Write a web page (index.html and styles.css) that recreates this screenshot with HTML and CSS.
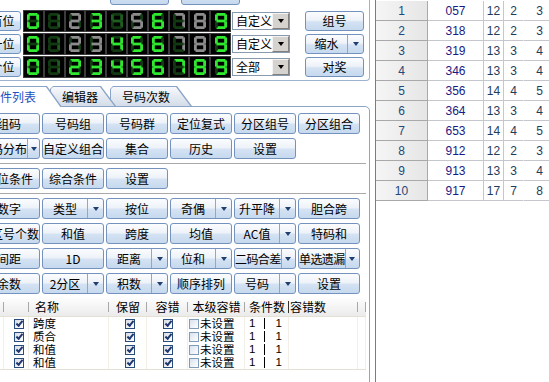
FILE: index.html
```html
<!DOCTYPE html>
<html lang="zh-CN">
<head>
    <meta charset="UTF-8">
    <meta name="viewport" content="width=device-width, initial-scale=1.0">

    <link rel="stylesheet" href="styles.css">

    <title>号码过滤</title>
</head>
<body onload="desenhaLeds()">
<div class="app">
    <div class="left">
        <div class="topbox">
            <div class="toolrow">
                <button class="btn tool">全部选择</button>
                <button class="btn tool">全部清除</button>
            </div>
            <div class="ledrow">
                <button class="btn pos">百位</button>
                <div class="led" data-estados="gdrgdrgrrg"></div>
                <div class="combo"><span>自定义</span><i></i></div>
                <button class="btn side-btn">组号</button>
            </div>
            <div class="ledrow">
                <button class="btn pos">十位</button>
                <div class="led" data-estados="gdrrgggrrg"></div>
                <div class="combo"><span>自定义</span><i></i></div>
                <button class="btn side-btn split"><span class="lbl">缩水</span><span class="arr"></span></button>
            </div>
            <div class="ledrow">
                <button class="btn pos">个位</button>
                <div class="led" data-estados="gdgggggggg"></div>
                <div class="combo"><span>全部</span><i></i></div>
                <button class="btn side-btn">对奖</button>
            </div>
        </div>

        <div class="tabs">
            <div class="tab sel">条件列表</div>
            <div class="tab t2">编辑器</div>
            <div class="tab t3">号码次数</div>
        </div>

        <div class="panel">
            <div class="btnrow">
                <button class="btn">组码</button>
                <button class="btn">号码组</button>
                <button class="btn">号码群</button>
                <button class="btn">定位复式</button>
                <button class="btn">分区组号</button>
                <button class="btn">分区组合</button>
            </div>
            <div class="btnrow">
                <button class="btn split"><span class="lbl">号码分布</span><span class="arr"></span></button>
                <button class="btn">自定义组合</button>
                <button class="btn">集合</button>
                <button class="btn">历史</button>
                <button class="btn">设置</button>
            </div>
            <div class="sep"></div>
            <div class="btnrow">
                <button class="btn">定位条件</button>
                <button class="btn">综合条件</button>
                <button class="btn">设置</button>
            </div>
            <div class="sep"></div>
            <div class="btnrow">
                <button class="btn">数字</button>
                <button class="btn split"><span class="lbl">类型</span><span class="arr"></span></button>
                <button class="btn">按位</button>
                <button class="btn split"><span class="lbl">奇偶</span><span class="arr"></span></button>
                <button class="btn split"><span class="lbl">升平降</span><span class="arr"></span></button>
                <button class="btn">胆合跨</button>
            </div>
            <div class="btnrow">
                <button class="btn">分区号个数</button>
                <button class="btn">和值</button>
                <button class="btn">跨度</button>
                <button class="btn">均值</button>
                <button class="btn split"><span class="lbl">AC值</span><span class="arr"></span></button>
                <button class="btn">特码和</button>
            </div>
            <div class="btnrow">
                <button class="btn">间距</button>
                <button class="btn">1D</button>
                <button class="btn split"><span class="lbl">距离</span><span class="arr"></span></button>
                <button class="btn split"><span class="lbl">位和</span><span class="arr"></span></button>
                <button class="btn split"><span class="lbl tight">二码合差</span><span class="arr"></span></button>
                <button class="btn split"><span class="lbl tight">单选遗漏</span><span class="arr"></span></button>
            </div>
            <div class="btnrow">
                <button class="btn">余数</button>
                <button class="btn split"><span class="lbl">2分区</span><span class="arr"></span></button>
                <button class="btn split"><span class="lbl">积数</span><span class="arr"></span></button>
                <button class="btn">顺序排列</button>
                <button class="btn split"><span class="lbl">号码</span><span class="arr"></span></button>
                <button class="btn">设置</button>
            </div>

            <div class="list">
                <div class="lrow lhead">
                    <span></span><span></span><span class="name">名称</span><span>保留</span><span>容错</span><span>本级容错</span><span>条件数</span><span class="name dark">容错数</span><span></span>
                </div>
                <div class="lbody">
                    <div class="lrow">
                        <span></span><span class="c1"><i class="chk on"></i></span><span class="name">跨度</span><span class="c3"><i class="chk on"></i></span><span class="c3"><i class="chk on"></i></span><span class="lvl"><i class="chk"></i>未设置</span><span class="cnt">1<b class="vbar"></b>1</span><span></span><span></span>
                    </div>
                    <div class="lrow">
                        <span></span><span class="c1"><i class="chk on"></i></span><span class="name">质合</span><span class="c3"><i class="chk on"></i></span><span class="c3"><i class="chk on"></i></span><span class="lvl"><i class="chk"></i>未设置</span><span class="cnt">1<b class="vbar"></b>1</span><span></span><span></span>
                    </div>
                    <div class="lrow">
                        <span></span><span class="c1"><i class="chk on"></i></span><span class="name">和值</span><span class="c3"><i class="chk on"></i></span><span class="c3"><i class="chk on"></i></span><span class="lvl"><i class="chk"></i>未设置</span><span class="cnt">1<b class="vbar"></b>1</span><span></span><span></span>
                    </div>
                    <div class="lrow">
                        <span></span><span class="c1"><i class="chk on"></i></span><span class="name">和值</span><span class="c3"><i class="chk on"></i></span><span class="c3"><i class="chk on"></i></span><span class="lvl"><i class="chk"></i>未设置</span><span class="cnt">1<b class="vbar"></b>1</span><span></span><span></span>
                    </div>
                </div>
            </div>
        </div>
    </div>

    <div class="side">
        <table class="grid">
            <tr><td class="no">1</td><td class="num">057</td><td class="c3">12</td><td class="c4">2</td><td>3</td></tr>
            <tr><td class="no">2</td><td class="num">318</td><td>12</td><td class="c4">2</td><td>3</td></tr>
            <tr><td class="no">3</td><td class="num">319</td><td>13</td><td class="c4">3</td><td>4</td></tr>
            <tr><td class="no">4</td><td class="num">346</td><td>13</td><td class="c4">3</td><td>4</td></tr>
            <tr><td class="no">5</td><td class="num">356</td><td>14</td><td class="c4">4</td><td>5</td></tr>
            <tr><td class="no">6</td><td class="num">364</td><td>13</td><td class="c4">3</td><td>4</td></tr>
            <tr><td class="no">7</td><td class="num">653</td><td>14</td><td class="c4">4</td><td>5</td></tr>
            <tr><td class="no">8</td><td class="num">912</td><td>12</td><td class="c4">2</td><td>3</td></tr>
            <tr><td class="no">9</td><td class="num">913</td><td>13</td><td class="c4">3</td><td>4</td></tr>
            <tr><td class="no">10</td><td class="num">917</td><td>17</td><td class="c4">7</td><td>8</td></tr>
        </table>
    </div>
</div>

<script>
    /* segmentos do display: x, y, largura, altura */
    var SEG = {
        a: [1.5, 0, 9, 2.8],
        b: [9.2, 1.4, 2.8, 6.3],
        c: [9.2, 8.3, 2.8, 6.3],
        d: [1.5, 13.2, 9, 2.8],
        e: [0, 8.3, 2.8, 6.3],
        f: [0, 1.4, 2.8, 6.3],
        g: [1.5, 6.6, 9, 2.8]
    };
    var DIGITOS = ["abcdef", "bc", "abdeg", "abcdg", "bcfg", "acdfg", "acdefg", "abc", "abcdefg", "abcdfg"];

    /* Monta o svg de um digito */
    function desenhaDigito(n, estado) {
        var html = '<svg viewBox="0 0 12 16" class="' + estado + '">';
        for (var s in SEG) {
            var r = SEG[s],
                cls = DIGITOS[n].indexOf(s) >= 0 ? "on" : "off";
            html += '<rect class="' + cls + '" x="' + r[0] + '" y="' + r[1] + '" width="' + r[2] + '" height="' + r[3] + '"/>';
        }
        return html + '</svg>';
    }

    /* Preenche as tres linhas de 0 a 9 */
    function desenhaLeds() {
        var leds = document.querySelectorAll(".led");
        for (var i = 0; i < leds.length; i++) {
            var estados = leds[i].getAttribute("data-estados"),
                html = "";
            for (var n = 0; n < 10; n++) {
                html += '<div class="cell">' + desenhaDigito(n, estados.charAt(n)) + '</div>';
            }
            leds[i].innerHTML = html;
        }
    }
</script>
</body>
</html>
```

FILE: styles.css
```css
* {
    box-sizing: border-box;
}

body {
    margin: 0;
    background-color: white;
    font-family: "Noto Sans CJK SC", "Liberation Sans", sans-serif;
    font-size: 12px;
    color: black;
    overflow: hidden;
}

.app {
    display: flex;
    height: 382px;
    overflow: hidden;
}

.left {
    flex: none;
    display: flex;
    flex-direction: column;
    width: 394px;
    height: 420px;
    margin-left: -24px;
}

/* botoes azuis */
.btn {
    flex: none;
    display: flex;
    align-items: center;
    justify-content: center;
    width: 62px;
    height: 21px;
    padding: 0;
    border: 1px solid #7393be;
    border-radius: 3px;
    background: linear-gradient(#fbfcfe, #eef3f9 45%, #d4e2f3 55%, #c6d9ee);
    font: inherit;
    color: black;
    line-height: 14px;
    white-space: nowrap;
}

.split {
    justify-content: flex-start;
}

.split .lbl {
    flex: 1;
    text-align: center;
}

.split .tight {
    letter-spacing: -0.6px;
}

.split .arr {
    display: flex;
    align-items: center;
    justify-content: center;
    width: 16px;
    align-self: stretch;
    border-left: 1px solid #8ca8cc;
}

.split .arr::after {
    content: "";
    border-left: 3.5px solid transparent;
    border-right: 3.5px solid transparent;
    border-top: 4px solid #1f3f70;
}

/* caixa de cima */
.topbox {
    margin-top: -17px;
    padding-bottom: 1px;
    border-right: 1px solid #9db2ce;
    border-bottom: 1px solid #9db2ce;
    border-bottom-right-radius: 4px;
}

.toolrow {
    display: flex;
    gap: 12px;
    height: 22px;
    padding-left: 134px;
    margin-bottom: 5px;
}

.tool {
    width: 59px;
    height: 22px;
}

.ledrow {
    display: flex;
    align-items: center;
    height: 22px;
    margin-bottom: 1px;
}

.pos {
    width: 37px;
    height: 20px;
    margin-left: 8px;
    margin-right: 2px;
}

.led {
    display: grid;
    grid-template-columns: repeat(10, 1fr);
    width: 208px;
    height: 22px;
}

.cell {
    display: flex;
    align-items: center;
    justify-content: center;
    background-color: black;
    border: 1px solid #3c3c3c;
}

.cell svg {
    width: 12px;
    height: 16px;
}

.off {
    fill: #123a12;
}

.g .on {
    fill: #30e830;
}

.d .on {
    fill: #1e5e1e;
}

.r .on {
    fill: #8c8c8c;
}

.combo {
    display: flex;
    width: 58px;
    height: 18px;
    margin-left: 1px;
    border: 1px solid #8a9aae;
    background-color: white;
}

.combo span {
    flex: 1;
    padding-left: 3px;
    line-height: 16px;
}

.combo i {
    display: flex;
    align-items: center;
    justify-content: center;
    width: 17px;
    background-color: #d6d3ce;
    border: 1px solid;
    border-color: #f4f4f4 #808080 #808080 #f4f4f4;
}

.combo i::after {
    content: "";
    border-left: 3.5px solid transparent;
    border-right: 3.5px solid transparent;
    border-top: 4px solid black;
}

.side-btn {
    width: 59px;
    height: 20px;
    margin-left: 15px;
}

/* abas */
.tabs {
    position: relative;
    z-index: 1;
    display: flex;
    height: 20px;
    margin-top: 5px;
}

.tab {
    position: relative;
    height: 20px;
    padding: 4px 0 0 12px;
    line-height: 14px;
    white-space: nowrap;
}

.tab::before,
.tab::after {
    content: "";
    position: absolute;
    z-index: -1;
}

.tab::before {
    inset: 0;
    background-color: #8ba4c8;
    clip-path: polygon(0 100%, 0 3px, 3px 0, calc(100% - 15px) 0, 100% 100%);
}

.tab::after {
    inset: 1px 1px 0 1px;
    background: linear-gradient(#f7f9fb, #d3dce8);
    clip-path: polygon(0 100%, 0 2px, 2px 0, calc(100% - 15px) 0, calc(100% - 0.7px) 100%);
}

.sel {
    z-index: 3;
    width: 86px;
    height: 21px;
    color: #1c4fc0;
}

.sel::after {
    background: white;
}

.t2 {
    z-index: 2;
    width: 66px;
    margin-left: -12px;
}

.t3 {
    z-index: 1;
    width: 82px;
    margin-left: -6px;
}

/* painel das abas */
.panel {
    flex: 1;
    padding: 6px 3px 0 1px;
    border: 1px solid #8ba4c8;
    border-top-right-radius: 5px;
}

.btnrow {
    display: flex;
    gap: 2px;
    margin-bottom: 4px;
}

.sep {
    height: 1px;
    margin: 0 0 4px 0;
    background-color: #a9a9a9;
}

/* lista de condicoes */
.lrow {
    display: grid;
    grid-template-columns: 26px 25px 80px 38px 41px 57px 44px 69px 1fr;
    height: 13px;
    line-height: 13px;
}

.lrow span {
    display: flex;
    align-items: center;
    white-space: nowrap;
}

.lhead {
    height: 18px;
    background: linear-gradient(#fdfdfd, #ebebeb);
}

.lhead span {
    position: relative;
    justify-content: center;
    line-height: 16px;
}

.lhead span::after {
    content: "";
    position: absolute;
    right: 0;
    top: 4px;
    width: 1px;
    height: 10px;
    background-color: #a8a8a8;
}

.lhead .name {
    justify-content: flex-start;
    padding-left: 6px;
}

.lhead .dark {
    padding-left: 1px;
}

.lhead span:nth-child(7)::after {
    top: 3px;
    height: 12px;
    background-color: #333;
}

.lbody {
    border-top: 1px solid #e4e1d4;
    font-size: 11.5px;
}

.lbody .lrow:last-child {
    border-bottom: 1px solid #e4e1d4;
    height: 14px;
}

.lbody span {
    border-right: 1px solid #f1efe6;
}

.lbody .name {
    padding-left: 4px;
}

.c1 {
    padding-left: 10px;
}

.c3 {
    padding-left: 16px;
}

.lvl {
    gap: 1px;
    padding-left: 1px;
}

.cnt {
    padding-left: 4px;
    font-family: "Liberation Sans", sans-serif;
}

.vbar {
    display: inline-block;
    width: 1px;
    height: 11px;
    margin: 0 10px 0 9px;
    background-color: black;
}

.chk {
    display: inline-flex;
    align-items: center;
    justify-content: center;
    width: 10px;
    height: 10px;
    border: 1px solid #7f9db9;
    background: linear-gradient(135deg, #d9e2ef, white);
}

.chk.on {
    border-color: #2a4c7c;
    background: linear-gradient(135deg, #d8dce4, white);
}

.chk.on::after {
    content: "";
    width: 5px;
    height: 2px;
    margin-top: -2px;
    border-left: 2px solid #1f3870;
    border-bottom: 2px solid #1f3870;
    transform: rotate(-50deg);
}

/* tabela da direita */
.side {
    flex: none;
    width: 180px;
    margin-left: 5px;
    border-left: 1px solid #7c7c7c;
}

.grid {
    width: 179px;
    margin-top: 1px;
    border-collapse: separate;
    border-spacing: 0;
    table-layout: fixed;
    font-family: "Liberation Sans", sans-serif;
    font-size: 12px;
}

.grid td {
    height: 20px;
    padding: 0;
    border-right: 1px solid #c6c6ce;
    border-bottom: 1px solid #c6c6ce;
    text-align: center;
    color: #1e3c5c;
}

.grid td:last-child {
    border-right: none;
}

.grid .no {
    width: 52px;
    background: linear-gradient(to right, #f5f5f5, #e6e6e6);
    border-color: #a9a9a9;
    color: #24487a;
}

.grid .num {
    width: 56px;
    color: #1a1a80;
}

.grid .c3 {
    width: 20px;
}

.grid .c4 {
    width: 20px;
    border-right-color: white;
}
```
